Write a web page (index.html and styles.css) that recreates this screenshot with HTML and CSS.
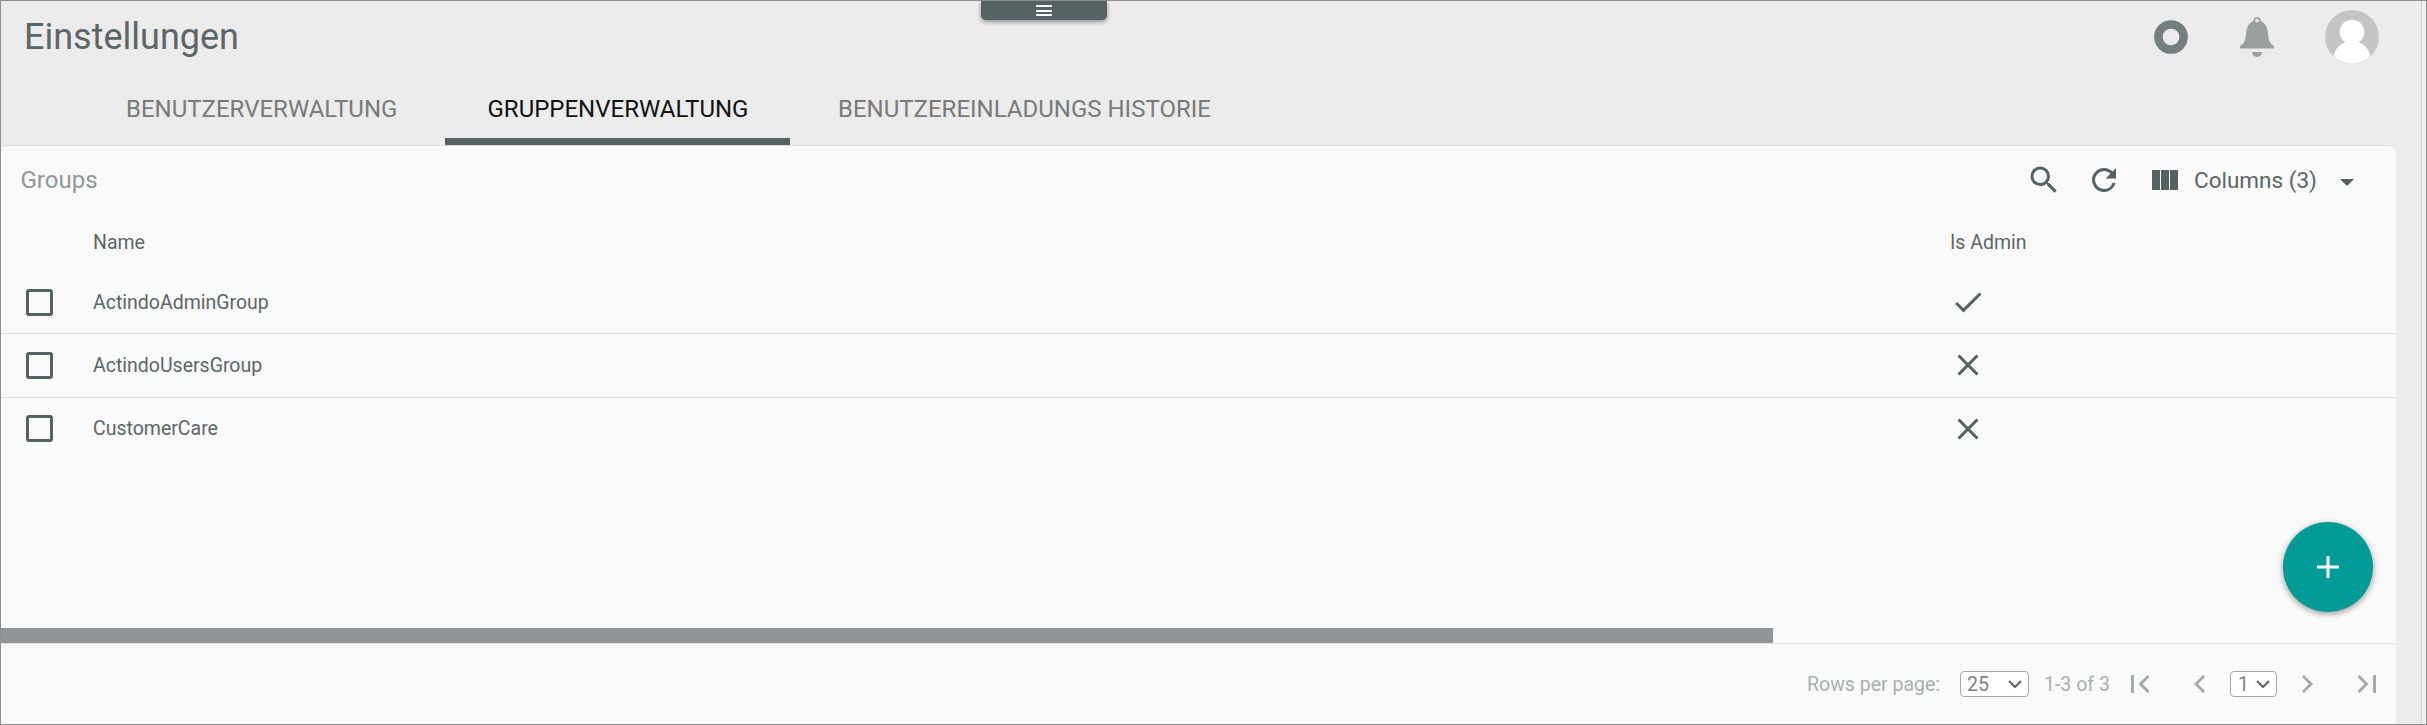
FILE: index.html
```html
<!DOCTYPE html>
<html lang="de">
<head>
<meta charset="utf-8">
<title>Einstellungen</title>
<link rel="stylesheet" href="styles.css">
</head>
<body>
<div class="app">
  <div class="main">
    <header class="topbar">
      <h1 class="title">Einstellungen</h1>
      <div class="actions">
        <svg class="ring" viewBox="0 0 34 34"><circle cx="17" cy="17" r="12.6"/></svg>
        <svg class="bell" viewBox="0 0 34 41"><path fill-rule="evenodd" d="M17 0a4 4 0 0 1 3.900 4.300C26 6.500 27.500 11 28 17c.5 6 1.500 9 5 11.300.7.500 1 1 1 1.700v1.500H0V30c0-.7.300-1.200 1-1.700C4.500 26 5.500 23 6 17 6.500 11 8 6.500 13.100 4.300A4 4 0 0 1 17 0zm0 1.700a1.900 1.900 0 1 0 0 3.800 1.900 1.900 0 0 0 0-3.800zM12 35h10a5 5 0 0 1-10 0z"/></svg>
        <svg class="avatar" viewBox="0 0 54 54"><circle cx="27" cy="27" r="27" fill="#c4c4c4"/><path fill="#fff" d="M27 10a12 12 0 0 1 6.500 22.300c6 1.800 10.200 7 12 14A27 27 0 0 1 8.500 46.300c1.800-7 6-12.200 12-14A12 12 0 0 1 27 10z"/></svg>
      </div>
    </header>
    <nav class="tabs">
      <a class="tab tab-first">BENUTZERVERWALTUNG</a>
      <a class="tab tab-active">GRUPPENVERWALTUNG</a>
      <a class="tab tab-last">BENUTZEREINLADUNGS HISTORIE</a>
    </nav>
    <section class="panel">
      <div class="toolbar">
        <span class="caption">Groups</span>
        <div class="tools">
          <svg class="icon search" viewBox="0 0 24 24"><path d="M15.500 14h-.79l-.28-.27A6.471 6.471 0 0 0 16 9.500 6.500 6.500 0 1 0 9.500 16c1.610 0 3.090-.59 4.230-1.570l.27.280v.790l5 4.990L20.490 19l-4.990-5zm-6 0C7.010 14 5 11.990 5 9.500S7.010 5 9.500 5 14 7.010 14 9.500 11.990 14 9.500 14z"/></svg>
          <svg class="icon refresh" viewBox="0 0 24 24"><path d="M17.650 6.350A7.958 7.958 0 0 0 12 4a8 8 0 1 0 7.730 10h-2.080A5.990 5.990 0 0 1 12 18a6 6 0 1 1 0-12c1.660 0 3.140.690 4.220 1.780L13 11h7V4l-2.350 2.350z"/></svg>
          <svg class="columns" viewBox="0 0 26 20"><path d="M0 0h8v20H0zM9 0h8v20H9zM18 0h8v20h-8z"/></svg>
          <span class="columns-label">Columns (3)</span>
          <svg class="caret" viewBox="0 0 14 7"><path d="M0 0h14L7 7z"/></svg>
        </div>
      </div>
      <div class="row head"><span class="name">Name</span><span class="admin">Is Admin</span></div>
      <div class="row row-first">
        <span class="check"></span><span class="name">ActindoAdminGroup</span>
        <span class="admin"><svg class="mark raised" viewBox="0 0 24 24"><path d="M9 16.170L4.830 12l-1.420 1.410L9 19 21 7l-1.410-1.410z"/></svg></span>
      </div>
      <div class="row">
        <span class="check"></span><span class="name">ActindoUsersGroup</span>
        <span class="admin"><svg class="mark raised" viewBox="0 0 24 24"><path d="M19 6.410L17.590 5 12 10.590 6.410 5 5 6.410 10.590 12 5 17.590 6.410 19 12 13.410 17.590 19 19 17.590 13.410 12z"/></svg></span>
      </div>
      <div class="row row-last">
        <span class="check"></span><span class="name">CustomerCare</span>
        <span class="admin"><svg class="mark" viewBox="0 0 24 24"><path d="M19 6.410L17.590 5 12 10.590 6.410 5 5 6.410 10.590 12 5 17.590 6.410 19 12 13.410 17.590 19 19 17.590 13.410 12z"/></svg></span>
      </div>
      <div class="space"></div>
      <div class="scrollbar"></div>
      <footer class="pager">
        <span class="rows-label">Rows per page:</span>
        <span class="select size">25<svg class="chev" viewBox="0 0 14 9"><path d="M1 1l6 6 6-6"/></svg></span>
        <span class="range">1-3 of 3</span>
        <svg class="nav first" viewBox="0 0 19 18"><path d="M1.500 0v18M17.500 1l-8 8 8 8"/></svg>
        <svg class="nav prev" viewBox="0 0 11 18"><path d="M10 1L2 9l8 8"/></svg>
        <span class="select page">1<svg class="chev" viewBox="0 0 14 9"><path d="M1 1l6 6 6-6"/></svg></span>
        <svg class="nav next" viewBox="0 0 11 18"><path d="M1 1l8 8-8 8"/></svg>
        <svg class="nav last" viewBox="0 0 19 18"><path d="M1.500 1l8 8-8 8M17.500 0v18"/></svg>
      </footer>
    </section>
  </div>
  <div class="gutter"></div>
  <div class="handle"><span></span><span></span><span></span></div>
  <button class="fab" aria-label="Add"><svg viewBox="0 0 22 22"><path d="M11 0v22M0 11h22"/></svg></button>
</div>
</body>
</html>
```
FILE: styles.css
```css
* { box-sizing: border-box; }
body { margin: 0; font-family: Roboto, "Liberation Sans", sans-serif; color: #5c6668; }
svg { display: block; flex: none; fill: #566163; }
.app { position: relative; display: flex; width: 2427px; height: 725px; border: 1px solid #8e8e8e; background: #ebebeb; overflow: hidden; }
.main { width: 2395px; display: flex; flex-direction: column; }
.gutter { width: 5px; margin-left: auto; border-left: 1px solid #cfd2d2; background: #f0f0f0; }

.topbar { height: 72px; display: flex; justify-content: space-between; }
.title { margin: 0; padding: 0 0 0 23px; font-size: 36px; font-weight: 400; line-height: 72px; }
.actions { display: flex; align-items: flex-start; padding-right: 17px; }
.ring { width: 34px; height: 34px; margin: 19px 52px 0 0; fill: none; stroke: #747e7f; stroke-width: 8.500px; }
.bell { width: 34px; height: 41px; margin: 16px 51px 0 0; fill: #99a09f; }
.avatar { width: 54px; height: 54px; margin-top: 9px; }

.tabs { height: 72px; display: flex; font-size: 24px; line-height: 72px; color: #7a7a7a; white-space: nowrap; }
.tab-first { width: 444px; padding-left: 125px; }
.tab-active { width: 345px; padding-left: 42.500px; color: #111; border-bottom: 7px solid #566163; }
.tab-last { padding-left: 48px; }

.panel { flex: 1; display: flex; flex-direction: column; background: #f9f9f9; border-top: 1px solid #dcdcdc; border-radius: 6px 6px 3px 0; }
.toolbar { height: 68px; display: flex; align-items: center; justify-content: space-between; font-size: 24px; }
.caption { padding-left: 19.500px; color: #8f9798; }
.tools { display: flex; align-items: center; padding-right: 42px; }
.icon { width: 36px; height: 36px; }
.search { margin-right: 24px; }
.refresh { margin-right: 30px; }
.columns { width: 26px; height: 20px; margin-right: 16px; }
.columns-label { width: 146px; font-size: 22.500px; white-space: nowrap; }
.caret { width: 14px; height: 7px; margin-top: 5px; }

.row { height: 64px; display: flex; align-items: center; font-size: 19.5px; border-bottom: 1px solid #dcdcdc; }
.head { height: 58px; border: 0; padding: 0 0 1px 92px; }
.row-first { height: 62px; }
.row-last { border: 0; height: 61px; }
.check { width: 27px; height: 27px; margin: 0 40px 0 25px; border: 3px solid #566163; border-radius: 3px; }
.name { width: 1857px; }
.mark { width: 36px; height: 36px; }
.raised { margin-bottom: 2px; }
.space { flex: 1; }
.scrollbar { width: 1773px; height: 15px; margin-left: -1px; background: #919597; }

.pager { height: 81px; display: flex; align-items: center; border-top: 1px solid #e5e5e5; font-size: 19.5px; color: #a8afaf; padding-right: 20px; justify-content: flex-end; }
.rows-label { margin-right: 20px; }
.select { display: flex; align-items: center; justify-content: space-between; height: 26px; padding: 0 6px; border: 1px solid #a6a6a6; border-radius: 4px; background: #fff; color: #808080; }
.size { width: 69px; margin-right: 15px; }
.page { width: 47px; margin-right: 25px; padding-left: 7px; }
.chev { width: 14px; height: 9px; fill: none; stroke: #666; stroke-width: 2.200px; }
.nav { height: 18px; fill: none; stroke: #a4abab; stroke-width: 3px; }
.range { width: 87px; white-space: nowrap; }
.first { width: 19px; margin-right: 44px; }
.prev { width: 11px; margin-right: 25px; }
.next { width: 11px; margin-right: 44px; }
.last { width: 19px; }

.handle { position: absolute; top: 0; left: 980px; width: 126px; height: 19px; padding-top: 4px; display: flex; flex-direction: column; align-items: center; gap: 2.500px; background: #566163; border-radius: 0 0 5px 5px; box-shadow: 0 2px 4px rgba(0,0,0,.4); }
.handle span { width: 16px; height: 2px; background: #fff; }
.fab { position: absolute; left: 2282px; top: 521px; width: 90px; height: 90px; padding: 0; display: flex; align-items: center; justify-content: center; border: 0; border-radius: 50%; background: #009b97; box-shadow: 0 2px 6px rgba(0,0,0,.4); }
.fab svg { width: 22px; height: 22px; stroke: #fff; stroke-width: 3px; }
```
